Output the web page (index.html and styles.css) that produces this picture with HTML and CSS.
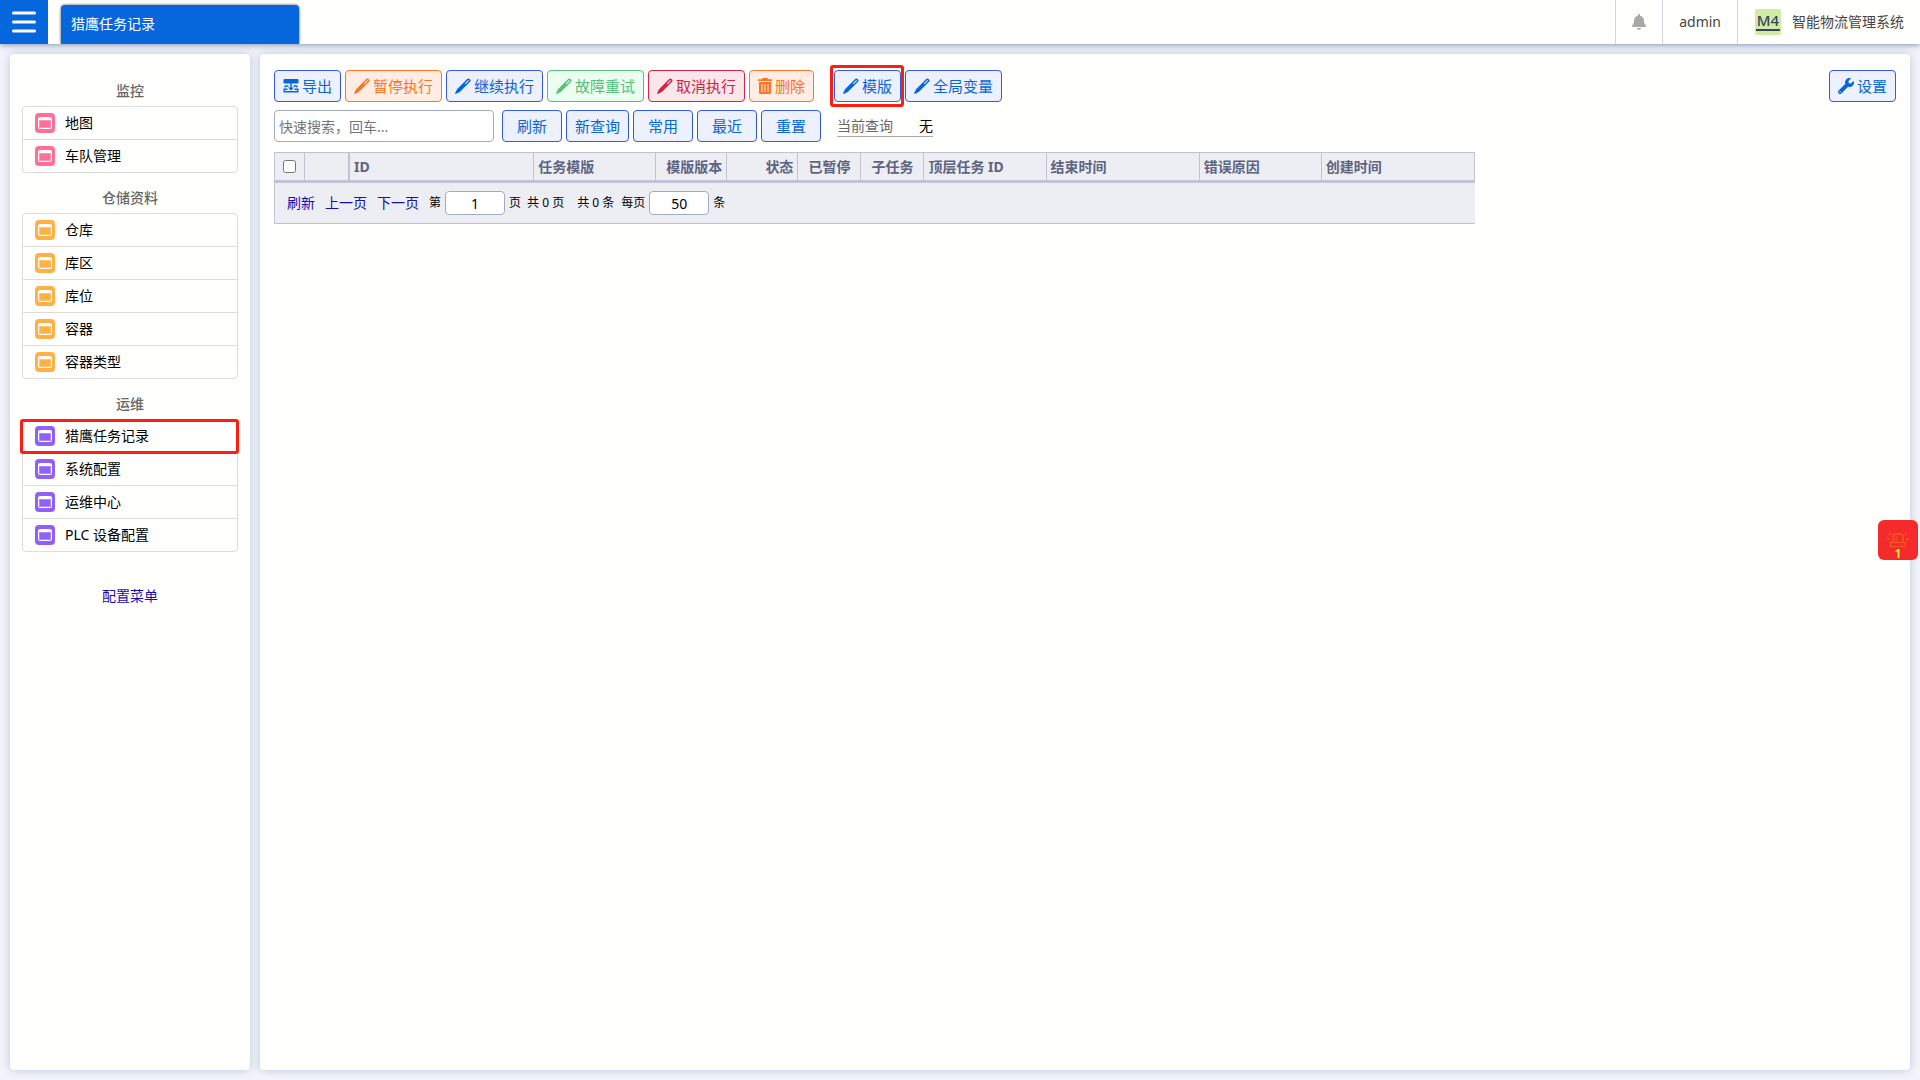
FILE: index.html
```html
<!DOCTYPE html>
<html lang="zh-CN">
<head>
<meta charset="utf-8">
<title>猎鹰任务记录</title>
<link rel="stylesheet" href="styles.css">
</head>
<body>
<svg class="sprite" aria-hidden="true">
  <symbol id="i-page" viewBox="0 0 20 20"><rect width="20" height="20" rx="4" fill="currentColor"/><rect x="3.5" y="4.5" width="13" height="11" rx="1" fill="none" stroke="#fff"/><rect x="4" y="5" width="12" height="2" fill="#fff"/><rect x="4.5" y="7.5" width="11" height="7" fill="none" stroke="#fff" stroke-opacity=".25"/></symbol>
  <symbol id="i-pen" viewBox="0 0 16 16"><path fill="currentColor" fill-rule="evenodd" d="M12.200 1a1.700 1.700 0 0 1 2.400 0l.4.4a1.700 1.700 0 0 1 0 2.400L4.800 14 1.200 15.700a.6.6 0 0 1-.9-.9L2 11.200zM9.800 5.500l.7.7L14 2.700l-.7-.7z"/></symbol>
  <symbol id="i-export" viewBox="0 0 16 16"><path fill="currentColor" d="M1.500 1h13a1 1 0 0 1 1 1v2.500a1 1 0 0 1-1 1h-13a1 1 0 0 1-1-1V2a1 1 0 0 1 1-1zM7.300 5h1.400v4.500H11l-3 3-3-3h2.300z"/><path fill="none" stroke="currentColor" stroke-width="1.400" d="M5.500 8H2.800L1.500 9.200M10.500 8h2.700l1.300 1.200M4.500 11.300H1.200v2.500h13.600v-2.500h-3.300"/></symbol>
  <symbol id="i-trash" viewBox="0 0 14 16"><path fill="currentColor" d="M4.500 0h5l.800 1.200H14V3H0V1.200h3.700z"/><path fill="currentColor" fill-rule="evenodd" d="M1 4h12v10.500a1.500 1.500 0 0 1-1.500 1.500h-9A1.500 1.500 0 0 1 1 14.500zM3.500 6v8h1V6zm3 0v8h1V6zm3 0v8h1V6z"/></symbol>
  <symbol id="i-wrench" viewBox="0 0 512 512"><path fill="currentColor" d="M507.700 109.100c-2.200-9-13.500-12.100-20.100-5.500l-74.400 74.400-67.900-11.300L334 98.900l74.400-74.400c6.600-6.600 3.400-17.900-5.700-20.200-47.400-11.700-99.600.900-136.600 37.900-39.600 39.600-50.500 97.100-34.100 147.200L18.700 402.800c-25 25-25 65.500 0 90.500s65.500 25 90.500 0l213.200-213.200c50.100 16.700 107.500 5.700 147.400-34.200 37.100-37.100 49.700-89.300 37.900-136.800zM64 472c-13.200 0-24-10.800-24-24 0-13.300 10.700-24 24-24s24 10.700 24 24c0 13.200-10.700 24-24 24z"/></symbol>
</svg>

<header class="topbar">
  <button class="burger" type="button" aria-label="菜单"><svg width="24" height="22" viewBox="0 0 24 22"><path d="M1.500 2h21M1.500 11h21M1.500 20h21" stroke="#fff" stroke-width="3" stroke-linecap="round"/></svg></button>
  <a class="tab" href="#">猎鹰任务记录</a>
  <div class="topbar-right">
    <button class="top-item bell" type="button" aria-label="通知"><svg width="14" height="16" viewBox="0 0 448 512"><path fill="currentColor" d="M224 512c35.300 0 63.900-28.600 63.900-64H160.100c0 35.400 28.600 64 63.900 64zm215.400-149.700c-19.300-20.800-55.500-52-55.500-154.300 0-77.700-54.500-139.900-127.900-155.200V32c0-17.700-14.300-32-32-32s-32 14.300-32 32v20.800C118.600 68.100 64.100 130.300 64.100 208c0 102.300-36.200 133.500-55.500 154.300-6 6.400-8.700 14.100-8.600 21.700.1 16.400 13 32 32.100 32h383.800c19.100 0 32-15.600 32.100-32 .1-7.600-2.600-15.300-8.600-21.700z"/></svg></button>
    <a class="top-item user" href="#">admin</a>
    <div class="top-item brand"><span class="logo"><span>M4</span></span><span>智能物流管理系统</span></div>
  </div>
</header>

<div class="layout">
  <nav class="card sidebar">
    <h2>监控</h2>
    <ul class="menu pink">
      <li><a href="#"><svg class="page-icon"><use href="#i-page"/></svg>地图</a></li>
      <li><a href="#"><svg class="page-icon"><use href="#i-page"/></svg>车队管理</a></li>
    </ul>
    <h2>仓储资料</h2>
    <ul class="menu orange">
      <li><a href="#"><svg class="page-icon"><use href="#i-page"/></svg>仓库</a></li>
      <li><a href="#"><svg class="page-icon"><use href="#i-page"/></svg>库区</a></li>
      <li><a href="#"><svg class="page-icon"><use href="#i-page"/></svg>库位</a></li>
      <li><a href="#"><svg class="page-icon"><use href="#i-page"/></svg>容器</a></li>
      <li><a href="#"><svg class="page-icon"><use href="#i-page"/></svg>容器类型</a></li>
    </ul>
    <h2>运维</h2>
    <ul class="menu purple">
      <li class="marked"><a href="#"><svg class="page-icon"><use href="#i-page"/></svg>猎鹰任务记录</a></li>
      <li><a href="#"><svg class="page-icon"><use href="#i-page"/></svg>系统配置</a></li>
      <li><a href="#"><svg class="page-icon"><use href="#i-page"/></svg>运维中心</a></li>
      <li><a href="#"><svg class="page-icon"><use href="#i-page"/></svg>PLC 设备配置</a></li>
    </ul>
    <a class="config-link" href="#">配置菜单</a>
  </nav>

  <main class="card content">
    <div class="toolbar">
      <div class="group">
        <button class="btn" type="button"><svg class="icon"><use href="#i-export"/></svg>导出</button>
        <button class="btn warn" type="button"><svg class="icon"><use href="#i-pen"/></svg>暂停执行</button>
        <button class="btn" type="button"><svg class="icon"><use href="#i-pen"/></svg>继续执行</button>
        <button class="btn ok" type="button"><svg class="icon"><use href="#i-pen"/></svg>故障重试</button>
        <button class="btn danger" type="button"><svg class="icon"><use href="#i-pen"/></svg>取消执行</button>
        <button class="btn warn" type="button"><svg class="icon narrow"><use href="#i-trash"/></svg>删除</button>
      </div>
      <div class="group">
        <span class="marked"><button class="btn" type="button"><svg class="icon"><use href="#i-pen"/></svg>模版</button></span>
        <button class="btn" type="button"><svg class="icon"><use href="#i-pen"/></svg>全局变量</button>
      </div>
      <button class="btn settings" type="button"><svg class="icon"><use href="#i-wrench"/></svg>设置</button>
    </div>

    <div class="searchbar">
      <input class="search" type="text" placeholder="快速搜索，回车..." aria-label="快速搜索">
      <div class="group">
        <button class="btn" type="button">刷新</button>
        <button class="btn" type="button">新查询</button>
        <button class="btn" type="button">常用</button>
        <button class="btn" type="button">最近</button>
        <button class="btn" type="button">重置</button>
      </div>
      <div class="current"><span class="current-label">当前查询</span><span>无</span></div>
    </div>

    <div class="grid">
      <table>
        <colgroup><col class="w-check"><col class="w-num"><col class="w-id"><col class="w-m"><col class="w-ver"><col class="w-ver"><col class="w-s"><col class="w-s"><col class="w-m"><col class="w-l"><col class="w-m"><col class="w-l"></colgroup>
        <thead>
          <tr>
            <th class="center"><input type="checkbox" aria-label="全选"></th>
            <th class="frozen"></th>
            <th>ID</th>
            <th>任务模版</th>
            <th class="right">模版版本</th>
            <th class="right">状态</th>
            <th class="center">已暂停</th>
            <th class="center">子任务</th>
            <th>顶层任务 ID</th>
            <th>结束时间</th>
            <th>错误原因</th>
            <th>创建时间</th>
          </tr>
        </thead>
      </table>
      <div class="pager">
        <a href="#">刷新</a>
        <a href="#">上一页</a>
        <a href="#">下一页</a>
        <label>第 <input type="text" value="1"> 页</label>
        <span class="pages">共 0 页</span>
        <span class="total">共 0 条</span>
        <label>每页 <input type="text" value="50"> 条</label>
      </div>
    </div>
  </main>
</div>

<button class="alarm" type="button" aria-label="告警">
  <svg width="24" height="18" viewBox="0 0 24 18" fill="none" stroke="#f9572c"><rect x="4.500" y="12.500" width="15" height="4"/><path d="M7 12V7q0-3 3-3h4q3 0 3 3v5M10 11V8l1-1M1 9h3M20 9h3M3 3l2 2M21 3l-2 2" stroke-width="1.300"/></svg>
  <span>1</span>
</button>
</body>
</html>
```
FILE: styles.css
```css
* { box-sizing: border-box; }
body {
  margin: 0;
  min-height: 100vh;
  display: flex;
  flex-direction: column;
  background: #f3f4f9;
  color: #000;
  font: 14px/20px "Noto Sans", "Noto Sans CJK SC", sans-serif;
}
button, input { font: inherit; margin: 0; }
a { text-decoration: none; color: inherit; }
.sprite { position: absolute; width: 0; height: 0; }

.topbar {
  position: relative;
  display: flex;
  height: 44px;
  background: #fffffd;
  box-shadow: 0 1px 6px #8092b0;
}
.burger {
  width: 48px;
  display: flex;
  align-items: center;
  justify-content: center;
  border: 0;
  padding: 0;
  background: #0666dc;
}
.tab {
  width: 238px;
  margin: 5px 0 0 13px;
  padding: 0 10px;
  line-height: 37px;
  border-radius: 4px 4px 0 0;
  background: #0666dc;
  color: #fff;
  box-shadow: 0 0 3px #445;
  clip-path: inset(-4px -4px 0 -4px);
}
.topbar-right { display: flex; margin-left: auto; color: #444; }
.top-item {
  display: flex;
  align-items: center;
  padding: 0 16px;
  border: 0;
  border-left: 1px solid #d4d6da;
  background: none;
}
.bell { color: #a9a9a9; }
.brand { gap: 11px; padding-left: 17px; }
.logo {
  width: 26px;
  height: 26px;
  padding: 0 1px 3px;
  border-radius: 2px;
  background: #d0eca4;
  color: #34475a;
  font-weight: 500;
  font-size: 15px;
  line-height: 22px;
  text-align: center;
}
.logo span { display: block; height: 22px; border-bottom: 2px solid #34475a; }

.layout { flex: 1; display: flex; gap: 10px; padding: 10px; }
.card {
  border-radius: 4px;
  background: #fffffe;
  box-shadow: 0 0 10px #b8c8dc;
}
.sidebar { width: 240px; flex: none; padding: 12px; }
.sidebar h2 {
  margin: 0;
  padding-top: 10px;
  font-size: 14px;
  line-height: 30px;
  font-weight: 500;
  text-align: center;
  color: #666;
}
.menu {
  list-style: none;
  margin: 0;
  padding: 0;
  border: 1px solid #dcdcdc;
  border-radius: 4px;
}
.menu li + li { border-top: 1px solid #dcdcdc; }
.menu a { display: flex; align-items: center; gap: 10px; height: 32px; padding: 0 12px; }
.page-icon { width: 20px; height: 20px; flex: none; }
.pink .page-icon { color: #ff6f98; }
.orange .page-icon { color: #ffb144; }
.purple .page-icon { color: #9060fa; }
.config-link { display: block; margin-top: 34px; text-align: center; color: #1a0dab; }

.marked { position: relative; display: block; }
.marked::after {
  content: "";
  position: absolute;
  inset: -5px -3px -5px -4px;
  border: 3px solid #ff1c10;
  border-radius: 3px;
  pointer-events: none;
}
.menu .marked::after { inset: -1px -2px -2px -3px; }

.content { flex: 1; min-width: 0; padding: 16px 14px; }
.toolbar { display: flex; gap: 20px; }
.group { display: flex; gap: 4px; }
.settings { margin-left: auto; }
.btn {
  display: flex;
  align-items: center;
  justify-content: center;
  gap: 3px;
  height: 32px;
  padding: 0 8px;
  border: 1px solid #3558e6;
  border-radius: 4px;
  background: #edf0fd;
  color: #0666dc;
  font-size: 15px;
  white-space: nowrap;
}
.warn { border-color: #ff7426; background: #ffede3; color: #ff7426; }
.ok { border-color: #55c07a; background: #eafff0; color: #55c07a; }
.danger { border-color: #d62246; background: #fae7ea; color: #d62246; }
.icon { width: 16px; height: 16px; flex: none; }
.icon.narrow { width: 14px; }

.searchbar { display: flex; align-items: center; gap: 8px; margin-top: 8px; }
.searchbar .btn { min-width: 60px; }
.search {
  width: 220px;
  height: 32px;
  padding: 0 4px;
  border: 1px solid #a3abbc;
  border-radius: 4px;
  background: #fff;
}
.search::placeholder { color: #757575; }
.current {
  display: flex;
  gap: 26px;
  margin-left: 8px;
  border-bottom: 1px solid #aaa;
}
.current-label { color: #666; }

.grid {
  width: 1201px;
  max-width: 100%;
  margin-top: 10px;
  background: #edeef3;
  border: solid #c3c2d2;
  border-width: 1px 0 1px 1px;
}
table { width: 100%; table-layout: fixed; border-spacing: 0; }
th {
  height: 30px;
  padding: 0 4px;
  border-right: 1px solid #c3c2d2;
  border-bottom: 3px solid #c3c2d2;
  color: #5d6480;
  font-weight: 700;
  text-align: left;
  white-space: nowrap;
}
th.frozen { border-right-width: 2px; }
th.center { text-align: center; }
th.right { text-align: right; }
th input { display: block; width: 13px; height: 13px; margin: 0 auto; }
.w-check { width: 30px; }
.w-num { width: 45px; }
.w-id { width: 184px; }
.w-m { width: 122px; }
.w-ver { width: 71px; }
.w-s { width: 63px; }
.w-l { width: 153px; }
.pager { display: flex; align-items: center; height: 40px; padding: 0 12px; font-size: 12px; }
.pager a { margin-right: 10px; font-size: 14px; color: #1a0dab; }
.pager label { display: flex; align-items: center; gap: 4px; }
.pager input {
  width: 60px;
  height: 24px;
  padding: 0;
  border: 1px solid #a3abbc;
  border-radius: 4px;
  background: #fff;
  font-size: 14px;
  text-align: center;
}
.pages { margin: 0 13px 0 6px; }
.total { margin-right: 7px; }

.alarm {
  position: fixed;
  right: 2px;
  top: 520px;
  width: 40px;
  height: 40px;
  padding: 10px 0 0;
  display: flex;
  flex-direction: column;
  align-items: center;
  border: 0;
  border-radius: 6px;
  background: #f52a2a;
  color: #ffe23c;
  font-size: 12px;
  font-weight: 700;
  line-height: 12px;
}
```
